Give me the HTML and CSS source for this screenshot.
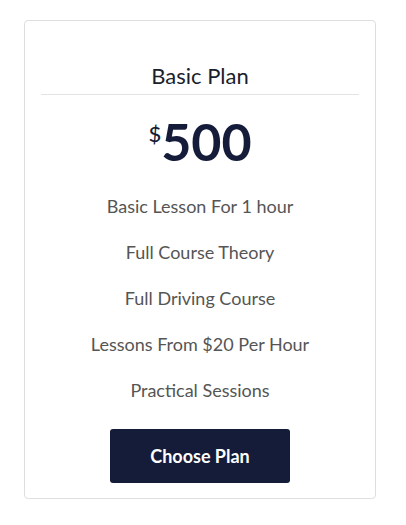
FILE: index.html
```html
<!DOCTYPE html>
<html>
<head>
<meta charset="utf-8">
<link rel="stylesheet" href="styles.css">
</head>
<body>
<div class="page">
  <div class="card">
    <h3 class="title">Basic Plan</h3>
    <div class="price"><span class="cur">$</span><span class="amount">500</span></div>
    <ul class="features">
      <li>Basic Lesson For 1 hour</li>
      <li>Full Course Theory</li>
      <li>Full Driving Course</li>
      <li>Lessons From $20 Per Hour</li>
      <li>Practical Sessions</li>
    </ul>
    <div class="actions"><a class="btn" href="#">Choose Plan</a></div>
  </div>
</div>
</body>
</html>
```
FILE: styles.css
```css
html, body { margin: 0; padding: 0; background: #fff; }
body { font-family: Lato, "Noto Sans", sans-serif; }
.page { padding: 20px 30px 0 24px; }
.card {
  border: 1px solid #dedede;
  border-radius: 4px;
  padding: 42px 16px 15px;
  text-align: center;
}
.title {
  margin: 0;
  font-size: 22px;
  line-height: 26px;
  font-weight: 400;
  color: #1b1e2b;
  padding-bottom: 5px;
  border-bottom: 1px solid #e3e3e3;
}
.price {
  margin-top: 22px;
  height: 48px;
  display: flex;
  justify-content: center;
  align-items: flex-start;
  color: #141c3a;
}
.cur { font-size: 22px; line-height: 22px; margin-top: 6px; margin-right: 0; font-weight: 500; }
.amount { font-size: 52px; line-height: 48px; font-weight: 700; }
.features {
  list-style: none;
  margin: 18px 0 0;
  padding: 0;
  font-size: 18px;
  line-height: 46px;
  color: #555;
}
.actions { margin-top: 16px; display: flex; justify-content: center; }
.btn {
  display: flex;
  align-items: center;
  justify-content: center;
  width: 180px;
  height: 54px;
  background: #141c3a;
  color: #fff;
  border-radius: 3px;
  font-weight: 700;
  font-size: 18px;
  text-decoration: none;
}
```
